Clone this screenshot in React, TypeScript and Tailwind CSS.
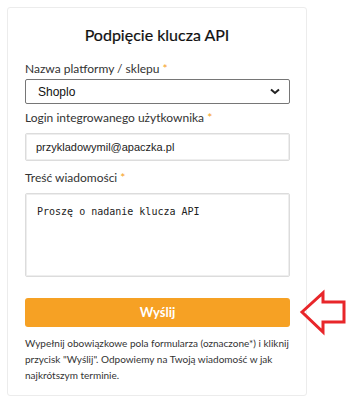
import React from "react";

export default function App() {
  const lato = { fontFamily: "Lato, 'Noto Sans', sans-serif" };
  const arial = { fontFamily: "'Liberation Sans', Arial, sans-serif" };
  return (
    <div className="relative w-[353px] h-[402px] bg-white overflow-hidden" style={lato}>
      <div className="ml-[7px] mt-[7px] w-[300px] h-[389px] border border-[#ececec] rounded-[3px] px-[17px] pt-[16px] flex flex-col">
        <h1 className="text-[16px] leading-[22px] text-[#111] text-center font-normal [-webkit-text-stroke:0.2px_#111]">Podpięcie klucza API</h1>
        <label className="mt-[15px] text-[12px] leading-[16px] text-[#333]">
          Nazwa platformy / sklepu <span className="text-[#f6a124]">*</span>
        </label>
        <div className="mt-[2px] h-[25px] w-[265px] border border-[#767676] rounded-[2px] flex items-center justify-between pl-[12px] pr-[9px]">
          <span className="text-[12px] leading-[14px] text-[#111]" style={arial}>Shoplo</span>
          <svg width="10" height="7" viewBox="0 0 10 7">
            <path d="M1 1.5 L5 5 L9 1.5" fill="none" stroke="#222" strokeWidth="2" />
          </svg>
        </div>
        <label className="mt-[6px] text-[12px] leading-[16px] text-[#333]">
          Login integrowanego użytkownika <span className="text-[#f6a124]">*</span>
        </label>
        <div className="mt-[7px] h-[28px] w-[265px] border border-[#dcdcdc] rounded-[2px] shadow-[inset_0_0_0_1px_#eeeeee] flex items-center pl-[10px]">
          <span className="text-[11px] leading-[14px] text-[#222]" style={arial}>przykladowymil@apaczka.pl</span>
        </div>
        <label className="mt-[9px] text-[12px] leading-[16px] text-[#333]">
          Treść wiadomości <span className="text-[#f6a124]">*</span>
        </label>
        <div className="mt-[7px] h-[84px] w-[265px] border border-[#dcdcdc] rounded-[2px] shadow-[inset_0_0_0_1px_#eeeeee] pl-[11px] pt-[12px]">
          <div className="text-[10px] leading-[12px] text-[#222]" style={{ fontFamily: "'DejaVu Sans Mono', 'Liberation Mono', monospace" }}>Proszę o nadanie klucza API</div>
        </div>
        <button className="mt-[21px] h-[29px] w-[265px] rounded-[3px] bg-[#f6a124] text-white text-[13px] font-bold">Wyślij</button>
        <p className="mt-[8px] text-[10px] leading-[16px] text-[#333]">
          Wypełnij obowiązkowe pola formularza (oznaczone*) i kliknij przycisk "Wyślij". Odpowiemy na Twoją wiadomość w jak najkrótszym terminie.
        </p>
      </div>
      <svg className="absolute left-[297px] top-[288px]" width="52" height="48" viewBox="297 288 52 48">
        <polygon points="302,312 323,293 323,302 344,302 344,322 323,322 323,332" fill="none" stroke="#e8262a" strokeWidth="3" strokeLinejoin="miter" />
      </svg>
    </div>
  );
}
